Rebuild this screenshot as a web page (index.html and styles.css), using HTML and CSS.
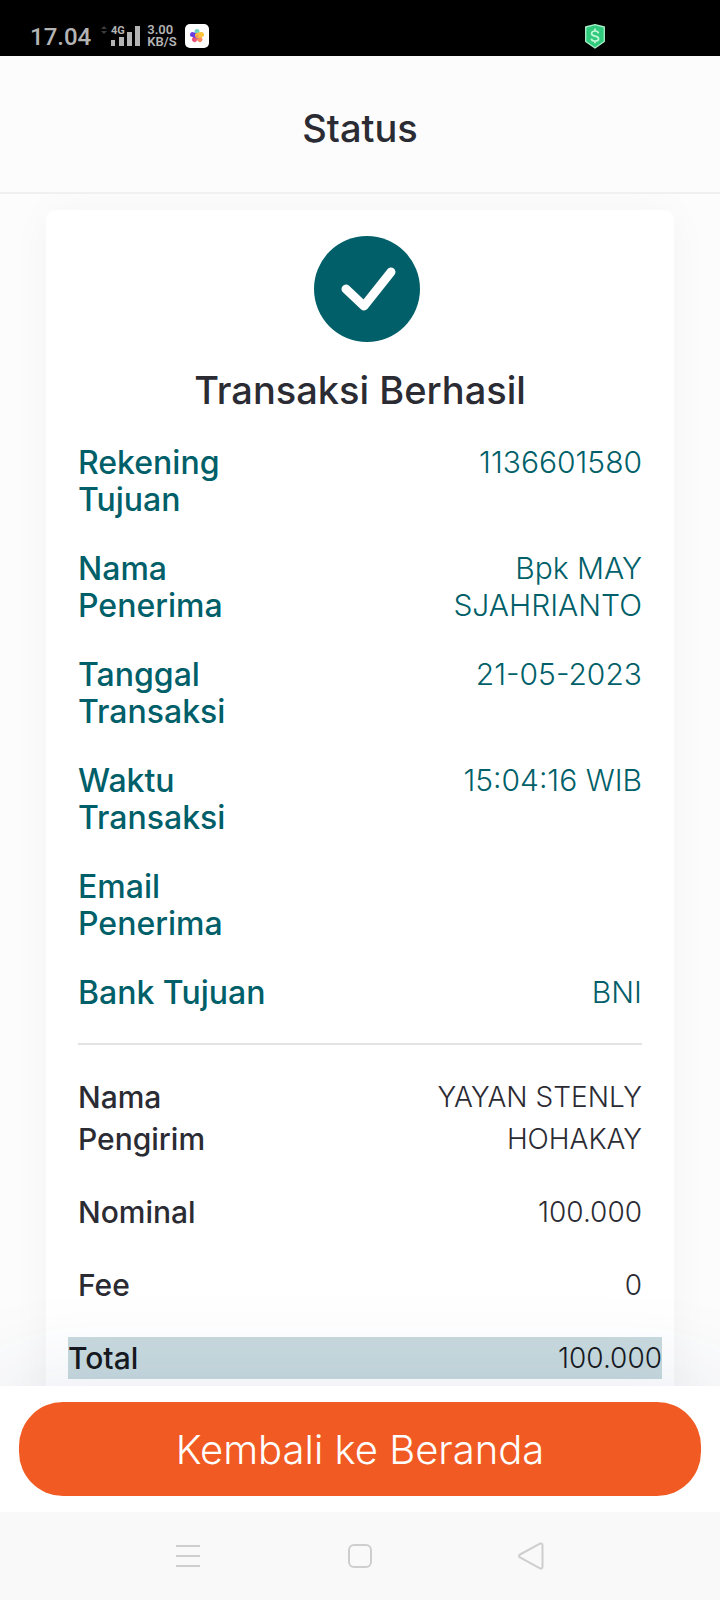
FILE: index.html
```html
<!DOCTYPE html>
<html lang="id">
<head>
    <meta charset="UTF-8">
    <meta name="viewport" content="width=device-width, initial-scale=1.0">
    <title>Status</title>
    <link rel="stylesheet" href="styles.css">
</head>
<body>
    <div class="statusbar">
        <span class="clock">17.04</span>
        <svg class="signal" width="40" height="24" viewBox="0 0 40 24">
            <path d="M0 5l3-3 3 3zM0 7l3 3 3-3z" fill="#3c3c3c"/>
            <text x="10" y="10" class="signal-text">4G</text>
            <path d="M10 16h4v6h-4zM18 13h5v9h-5zM26 8h5v14h-5zM34 2h5v20h-5z" fill="#b4b4b4"/>
        </svg>
        <span class="speed">3.00<br>KB/S</span>
        <svg class="app" width="24" height="24" viewBox="0 0 24 24">
            <rect width="24" height="24" rx="5" fill="#fff"/>
            <g stroke-width="5" stroke-linecap="round">
                <path d="M12 12V7.500" stroke="#6fd0bd"/>
                <path d="M12 12l-2.500 3.500" stroke="#e8517a"/>
                <path d="M12 12l3 3.500" stroke="#fb8a5c"/>
                <path d="M12 12l-4.500-1.500" stroke="#6a3fe0"/>
                <path d="M12.500 11.500l4-1" stroke="#fcc43a"/>
            </g>
            <circle cx="12" cy="12" r="1.500" fill="#f39a5a"/>
        </svg>
        <svg class="shield" width="20" height="25" viewBox="0 0 20 25">
            <path d="M10 .7L19.300 3v14.500L10 24 .7 17.500V3z" fill="#2fca7c" stroke="#a9f0c9" stroke-width="1.300" stroke-linejoin="round"/>
            <path d="M13.500 9.300C13.200 7.700 12 7 10 7S6.600 7.900 6.600 9.500c0 3.700 7 1.500 7 5.200 0 1.600-1.500 2.400-3.600 2.400s-3.500-.8-3.700-2.500M10 4.500V7M10 17v2.300" fill="none" stroke="#c2f7d8" stroke-width="1.700"/>
        </svg>
    </div>

    <header class="header">
        <h1>Status</h1>
    </header>

    <main class="content">
        <section class="card">
            <div class="check">
                <svg width="106" height="106" viewBox="0 0 106 106">
                    <circle cx="53" cy="53" r="53" fill="#005f69"/>
                    <path d="M32 53L50 70 77 36" fill="none" stroke="#fff" stroke-width="9" stroke-linecap="round" stroke-linejoin="round"/>
                </svg>
            </div>
            <h2>Transaksi Berhasil</h2>

            <dl class="details">
                <div class="row"><dt>Rekening Tujuan</dt><dd>1136601580</dd></div>
                <div class="row"><dt>Nama Penerima</dt><dd>Bpk MAY SJAHRIANTO</dd></div>
                <div class="row"><dt>Tanggal Transaksi</dt><dd>21-05-2023</dd></div>
                <div class="row"><dt>Waktu Transaksi</dt><dd>15:04:16 WIB</dd></div>
                <div class="row"><dt>Email Penerima</dt><dd></dd></div>
                <div class="row"><dt>Bank Tujuan</dt><dd>BNI</dd></div>
            </dl>

            <dl class="payment">
                <div class="row"><dt>Nama Pengirim</dt><dd>YAYAN STENLY HOHAKAY</dd></div>
                <div class="row"><dt>Nominal</dt><dd>100.000</dd></div>
                <div class="row"><dt>Fee</dt><dd>0</dd></div>
                <div class="row total"><dt>Total</dt><dd>100.000</dd></div>
            </dl>
        </section>
    </main>

    <footer class="footer">
        <button type="button" class="btn-home">Kembali ke Beranda</button>
    </footer>

    <nav class="navbar">
        <button type="button" aria-label="Aplikasi terbaru">
            <svg width="28" height="28" viewBox="0 0 28 28"><path d="M2 4h24M2 14h24M2 24h24"/></svg>
        </button>
        <button type="button" aria-label="Layar utama">
            <svg width="28" height="28" viewBox="0 0 28 28"><rect x="3" y="3" width="22" height="22" rx="5"/></svg>
        </button>
        <button type="button" aria-label="Kembali">
            <svg width="28" height="28" viewBox="0 0 28 28"><path d="M2 12.500L21.500 1.800q3-1 3 1.500v21.400q0 2.500-3 1.500L2 15.500q-2-1.500 0-3z"/></svg>
        </button>
    </nav>
</body>
</html>
```
FILE: styles.css
```css
* {
    box-sizing: border-box;
}
body {
    font-family: Inter, "Open Sans", sans-serif;
    background-color: #fcfcfc;
    color: #2b2b33;
    margin: 0;
    height: 100vh;
    display: flex;
    flex-direction: column;
}
h1, h2, dl, dd {
    margin: 0;
}

/* status bar */
.statusbar {
    flex: none;
    display: flex;
    align-items: flex-start;
    height: 56px;
    padding: 24px 115px 0 30px;
    background-color: #000;
    color: #b4b4b4;
    font-family: Roboto, sans-serif;
}
.clock {
    font-size: 24px;
    font-weight: 500;
    line-height: 26px;
    margin-right: 10px;
}
.signal-text {
    font-size: 11px;
    font-weight: bold;
    fill: #b4b4b4;
}
.speed {
    font-size: 13px;
    font-weight: 600;
    line-height: 12px;
    margin: 0 8px 0 6px;
}
.shield {
    margin-left: auto;
}

/* header */
.header {
    flex: none;
    height: 138px;
    display: flex;
    align-items: center;
    justify-content: center;
    padding-top: 8px;
    border-bottom: 2px solid #eef0f2;
}
h1, h2 {
    font-size: 38px;
    font-weight: 500;
    line-height: 48px;
}

/* card */
.content {
    flex: 1;
    min-height: 0;
    overflow: hidden;
    padding: 16px 46px;
}
.card {
    background-color: #fff;
    border-radius: 10px;
    padding: 26px 32px 32px;
    box-shadow: 0 4px 40px rgba(0, 0, 0, 0.04);
}
.check {
    display: flex;
    justify-content: center;
    padding-left: 14px;
    margin-bottom: 24px;
}
h2 {
    text-align: center;
    margin-bottom: 30px;
}
.row {
    display: flex;
    justify-content: space-between;
}
dt {
    width: 35%;
    font-weight: 500;
}
dd {
    width: 50%;
    font-weight: 300;
    text-align: right;
}
.details {
    display: grid;
    gap: 32px;
    padding-bottom: 32px;
    border-bottom: 2px solid #e3e3e3;
    color: #005f69;
    font-size: 30px;
    line-height: 37px;
}
.details dt {
    font-size: 32px;
}
.payment {
    display: grid;
    gap: 31px;
    padding-top: 31px;
    font-size: 28px;
    line-height: 42px;
}
.payment dt {
    font-size: 30px;
}
.total {
    margin: 0 -20px 0 -10px;
    background-color: #c8dade;
    color: #15181c;
}

/* bottom button */
.footer {
    flex: none;
    position: relative;
    padding: 16px 19px;
    background-color: #fff;
    box-shadow: 0 0 100px rgba(50, 70, 130, 0.12);
}
.btn-home {
    display: block;
    width: 100%;
    height: 94px;
    border: none;
    border-radius: 44px;
    background-color: #f15a22;
    color: #fff;
    font-family: inherit;
    font-size: 40px;
    font-weight: 300;
    cursor: pointer;
}

/* android navigation */
.navbar {
    flex: none;
    position: relative;
    display: flex;
    justify-content: center;
    gap: 116px;
    height: 88px;
    background-color: #f9f9f9;
}
.navbar button {
    display: flex;
    align-items: center;
    justify-content: center;
    width: 56px;
    padding: 0;
    border: none;
    background: none;
}
.navbar svg {
    fill: none;
    stroke: #cecece;
    stroke-width: 2;
}
```
